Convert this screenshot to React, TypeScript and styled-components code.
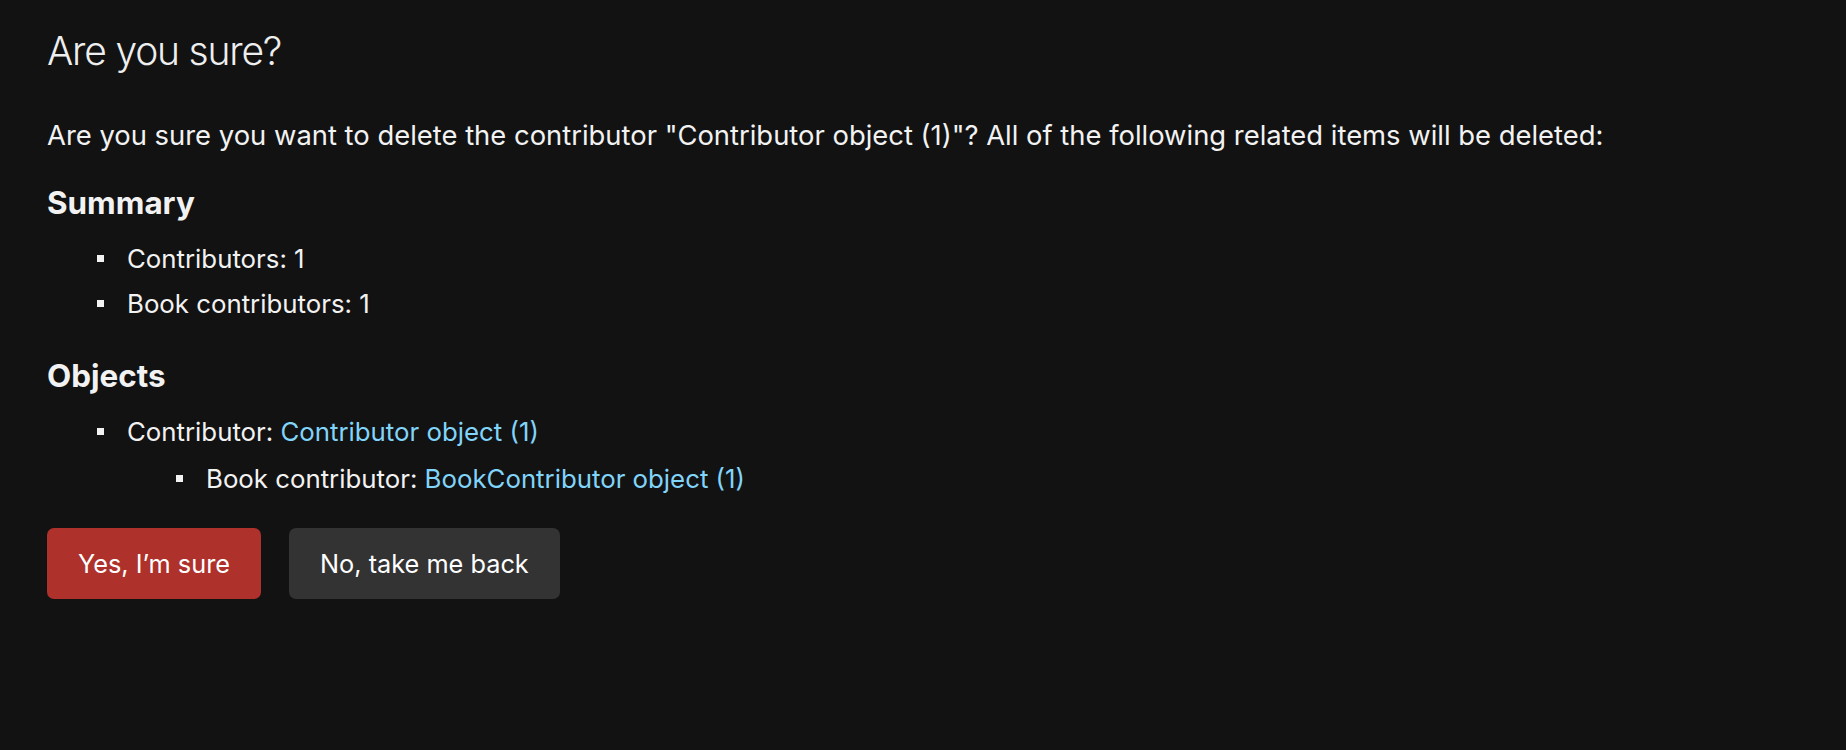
import React from "react";
import styled, { createGlobalStyle } from "styled-components";

const Global = createGlobalStyle`
  html, body {
    margin: 0;
    padding: 0;
    background: #121212;
  }
  body {
    color: #eeeeee;
    font-family: Inter, "Noto Sans", sans-serif;
    -webkit-font-smoothing: antialiased;
  }
`;

const Page = styled.main`
  min-height: 750px;
  box-sizing: border-box;
  padding: 27px 40px 0 47px;
  background: #121212;
`;

const Title = styled.h1`
  margin: 0 0 41px;
  font-size: 39px;
  line-height: 48px;
  font-weight: 300;
  letter-spacing: -1.2px;
  color: #eeeeee;
`;

const Lead = styled.p`
  margin: 0 0 30px;
  padding-top: 1px;
  font-size: 27.4px;
  line-height: 36px;
  color: #f2f2f2;
`;

const SectionTitle = styled.h2<{ $gapTop?: number }>`
  margin: ${(p) => p.$gapTop ?? 0}px 0 13px;
  font-size: 31.4px;
  line-height: 40px;
  font-weight: 700;
  color: #f2f2f2;
`;

const List = styled.ul<{ $nested?: boolean }>`
  list-style: none;
  margin: ${(p) => (p.$nested ? "2px 0 0" : "0")};
  padding: 0 0 0 ${(p) => (p.$nested ? 79 : 80)}px;
`;

const Item = styled.li`
  position: relative;
  font-size: 25.8px;
  line-height: 45px;
  color: #f2f2f2;

  &::before {
    content: "";
    position: absolute;
    left: -30px;
    top: 19px;
    width: 7px;
    height: 7px;
    background: #f2f2f2;
  }
`;

const Link = styled.a`
  color: #81d4fa;
  text-decoration: none;
  cursor: pointer;
`;

const Actions = styled.div`
  display: flex;
  gap: 28px;
  margin-top: 27px;
`;

const Button = styled.button<{ $danger?: boolean }>`
  height: 71px;
  padding: 0 31px;
  border: none;
  border-radius: 7px;
  font-family: Inter, "Noto Sans", sans-serif;
  font-size: 25.3px;
  color: #ffffff;
  background: ${(p) => (p.$danger ? "#ae312c" : "#333333")};
  cursor: pointer;
`;

export default function App() {
  return (
    <>
      <Global />
      <Page>
        <Title>Are you sure?</Title>
        <Lead>
          Are you sure you want to delete the contributor "Contributor object
          (1)"? All of the following related items will be deleted:
        </Lead>
        <SectionTitle>Summary</SectionTitle>
        <List>
          <Item>Contributors: 1</Item>
          <Item>Book contributors: 1</Item>
        </List>
        <SectionTitle $gapTop={30}>Objects</SectionTitle>
        <List>
          <Item>
            Contributor: <Link>Contributor object (1)</Link>
            <List $nested>
              <Item>
                Book contributor: <Link>BookContributor object (1)</Link>
              </Item>
            </List>
          </Item>
        </List>
        <Actions>
          <Button $danger>Yes, I’m sure</Button>
          <Button>No, take me back</Button>
        </Actions>
      </Page>
    </>
  );
}
